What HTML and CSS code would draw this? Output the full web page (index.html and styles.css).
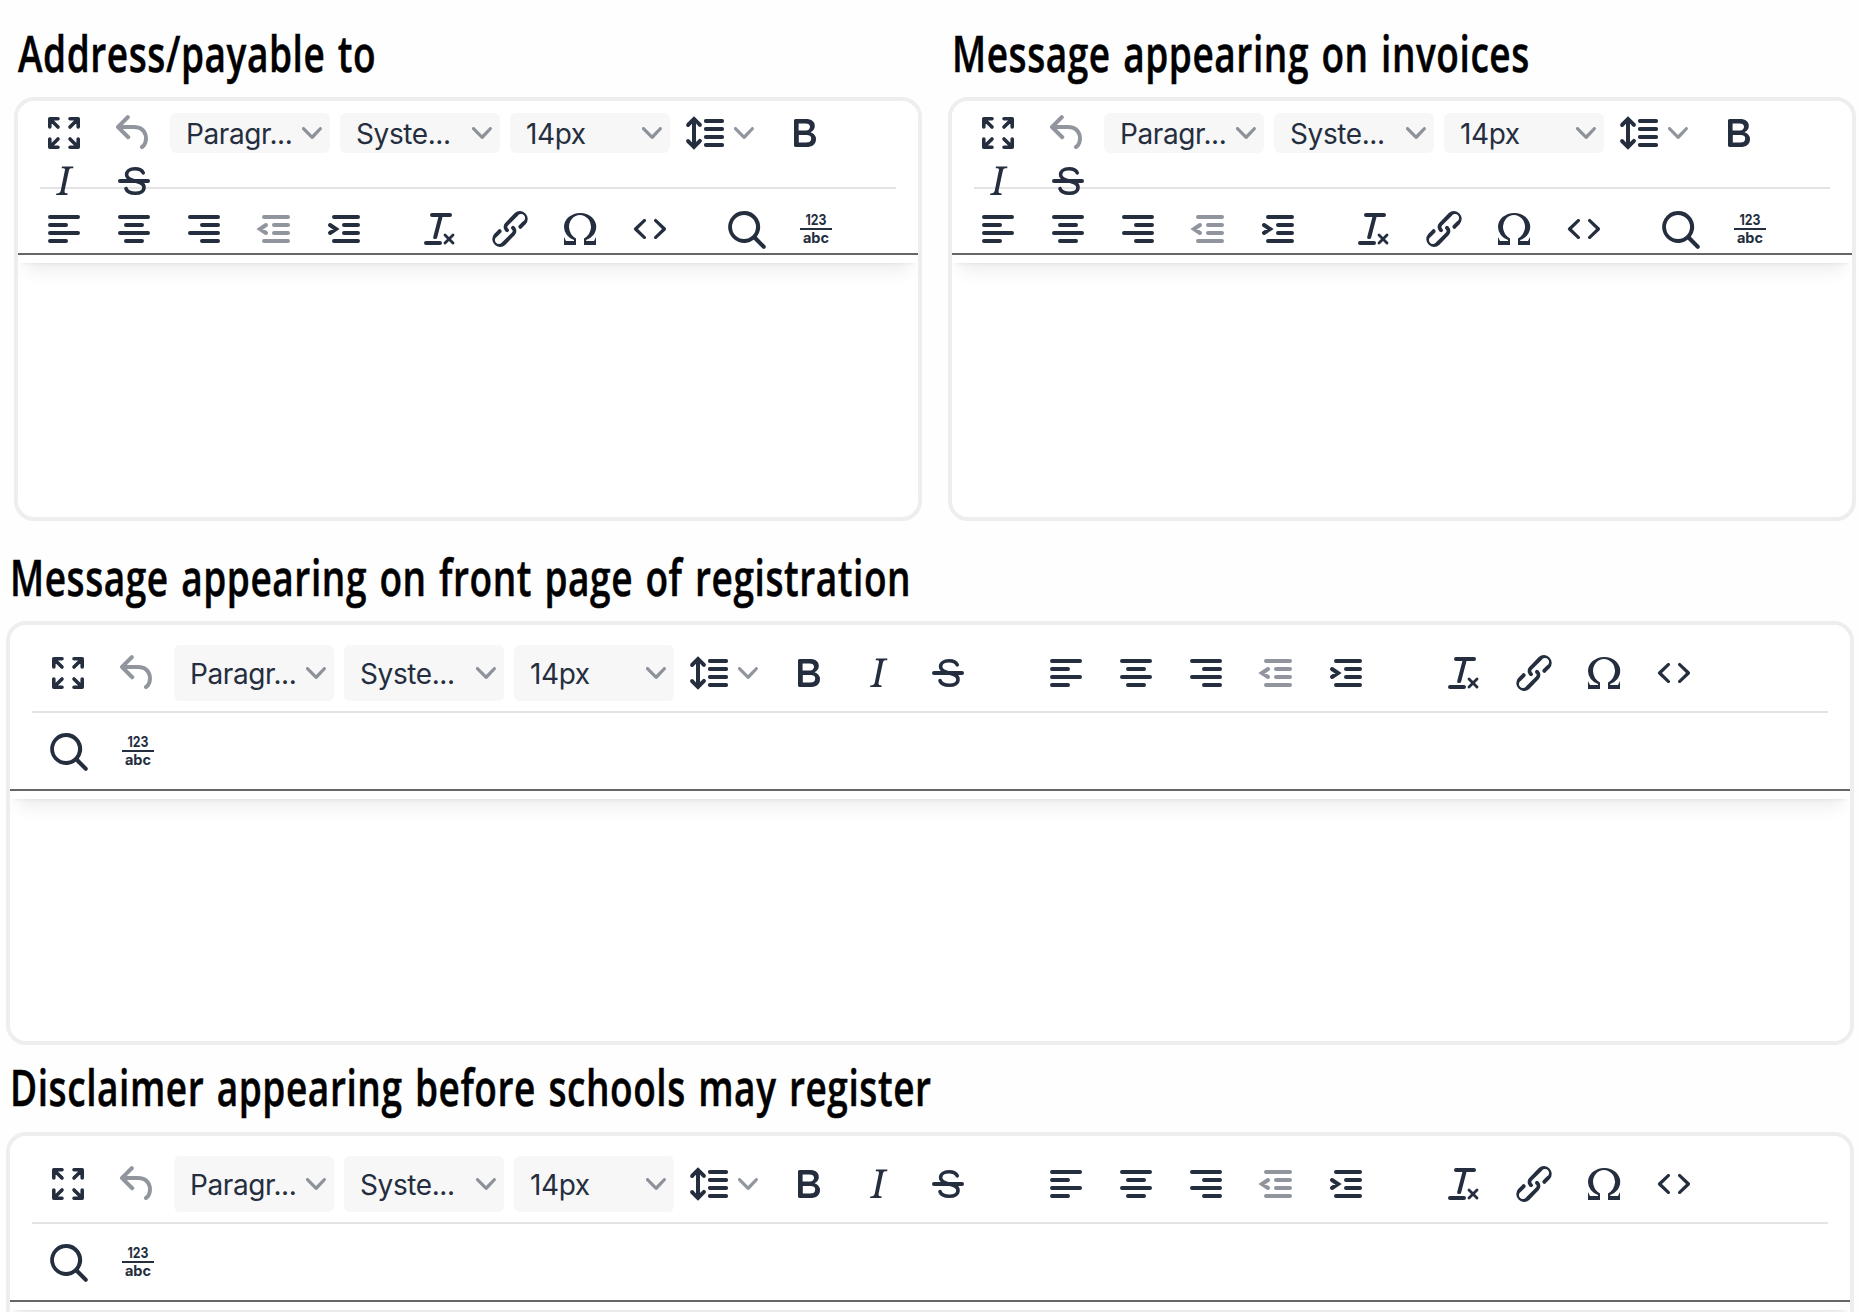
FILE: index.html
```html
<!DOCTYPE html>
<html lang="en">
<head>
<meta charset="utf-8">
<title>Messages</title>
<link rel="stylesheet" href="styles.css">
</head>
<body>
<svg class="sprite" xmlns="http://www.w3.org/2000/svg">
  <symbol id="fullscreen" viewBox="0 0 24 24"><path class="line" stroke-width="1.800" stroke-linejoin="round" d="M4.900 9V4.900H9M5.200 5.200 9 9M15 4.900h4.100V9M18.800 5.200 15 9M4.900 15v4.100H9M5.200 18.800 9 15M15 19.100h4.100V15M18.800 18.800 15 15"/></symbol>
  <symbol id="undo" viewBox="0 0 24 24"><path d="M6.400 8H12c3.700 0 6.200 2 6.800 5.100.6 2.700-.4 5.600-2.300 6.800a1 1 0 0 1-1-1.800c1.100-.6 1.800-2.700 1.400-4.600-.5-2.100-2.100-3.500-4.900-3.500H6.400l3.300 3.300a1 1 0 1 1-1.400 1.400l-5-5a1 1 0 0 1 0-1.400l5-5a1 1 0 0 1 1.400 1.400L6.400 8Z"/></symbol>
  <symbol id="chevron" viewBox="0 0 10 10"><path d="M8.700 2.200c.3-.3.800-.3 1 0 .4.400.4.900 0 1.200L5.700 7.800c-.3.300-.9.300-1.200 0L.2 3.400a.8.800 0 0 1 0-1.200c.3-.3.800-.3 1.100 0L5 6l3.700-3.800Z"/></symbol>
  <symbol id="lineheight" viewBox="0 0 24 24"><path d="M21 5a1 1 0 0 1 .1 2H13a1 1 0 0 1-.1-2H21Zm0 4a1 1 0 0 1 .1 2H13a1 1 0 0 1-.1-2H21Zm0 4a1 1 0 0 1 .1 2H13a1 1 0 0 1-.1-2H21Zm0 4a1 1 0 0 1 .1 2H13a1 1 0 0 1-.1-2H21ZM7 3.600l3.700 3.700a1 1 0 0 1-1.300 1.500h-.1L8 7.300v9.200l1.300-1.300a1 1 0 0 1 1.300 0h.1c.4.400.4 1 0 1.300v.1L7 20.400l-3.700-3.700a1 1 0 0 1 1.300-1.500h.1L6 16.700V7.400L4.700 8.700a1 1 0 0 1-1.300 0h-.1a1 1 0 0 1 0-1.300v-.1L7 3.600Z"/></symbol>
  <symbol id="bold" viewBox="0 0 24 24"><path d="M7.800 19c-.3 0-.5 0-.6-.2l-.2-.5V5.700c0-.2 0-.4.2-.5l.6-.2h5c1.500 0 2.700.3 3.500 1 .7.600 1.100 1.400 1.100 2.500a3 3 0 0 1-.6 1.900c-.4.600-1 1-1.600 1.200.4.100.9.300 1.300.6s.8.700 1 1.200c.4.400.5 1 .5 1.600 0 1.300-.4 2.300-1.300 3-.8.700-2.100 1-3.800 1H7.800Zm5-8.300c.6 0 1.200-.1 1.600-.5.4-.3.600-.7.600-1.300 0-1.100-.8-1.700-2.300-1.700H9.300v3.500h3.400Zm.5 6c.7 0 1.300-.1 1.700-.4.4-.4.600-.9.600-1.500s-.2-1-.7-1.400c-.4-.3-1-.4-2-.4H9.400v3.800h4Z"/></symbol>
  <symbol id="italic" viewBox="0 0 24 24"><path d="m16.700 4.700-.1.900h-.3c-.6 0-1 0-1.400.3-.3.300-.4.600-.5 1.100l-2.100 9.800v.6c0 .5.400.8 1.400.8h.2l-.2.800H8l.2-.8h.2c1.100 0 1.800-.5 2-1.500l2-9.800.1-.5c0-.6-.4-.8-1.400-.8h-.3l.2-.9h5.800Z"/></symbol>
  <symbol id="strike" viewBox="0 0 24 24"><path class="line" stroke-width="1.800" d="M16.600 7.900C16 6.600 14.600 5.900 12.500 5.900c-2.500 0-4.200 1.200-4.200 3 0 1.800 1.500 2.500 4.200 3.100 3 .7 4.500 1.400 4.500 3.200 0 1.800-1.700 2.900-4.300 2.900-2.400 0-4.200-.8-4.700-2.300"/><path d="M5 11h14a1 1 0 0 1 0 2H5a1 1 0 0 1 0-2Z"/></symbol>
  <symbol id="left" viewBox="0 0 24 24"><path class="line" stroke-width="2" d="M5 6h14M5 10h8M5 14h14M5 18h8"/></symbol>
  <symbol id="center" viewBox="0 0 24 24"><path class="line" stroke-width="2" d="M5 6h14M8 10h8M5 14h14M8 18h8"/></symbol>
  <symbol id="right" viewBox="0 0 24 24"><path class="line" stroke-width="2" d="M5 6h14M11 10h8M5 14h14M11 18h8"/></symbol>
  <symbol id="outdent" viewBox="0 0 24 24"><path class="line" stroke-width="2" d="M7 6h12M12 10h7M12 14h7M7 18h12M8 10l-3 2 3 2"/></symbol>
  <symbol id="indent" viewBox="0 0 24 24"><path class="line" stroke-width="2" d="M7 6h12M12 10h7M12 14h7M7 18h12M5 10l3 2-3 2"/></symbol>
  <symbol id="clear" viewBox="0 0 24 24"><path d="M13.200 6a1 1 0 0 1 0 .2l-2.600 10a1 1 0 0 1-1 .8h-.2a.8.800 0 0 1-.8-1l2.600-10H8a1 1 0 1 1 0-2h9a1 1 0 0 1 0 2h-3.800ZM5 18h7a1 1 0 0 1 0 2H5a1 1 0 0 1 0-2Zm13 1.500L16.500 18 15 19.500a.7.700 0 0 1-1-1l1.500-1.500-1.500-1.500a.7.700 0 0 1 1-1l1.500 1.500 1.500-1.500a.7.700 0 0 1 1 1L17.500 17l1.500 1.500a.7.700 0 0 1-1 1Z"/></symbol>
  <symbol id="link" viewBox="0 0 24 24"><path d="M6.200 12.300a1 1 0 0 1 1.400 1.400l-2 2a2 2 0 1 0 2.600 2.800l4.800-4.800a1 1 0 0 0 0-1.400 1 1 0 1 1 1.400-1.300 2.900 2.900 0 0 1 0 4L9.600 20a3.900 3.900 0 0 1-5.500-5.500l2-2Zm11.600-.6a1 1 0 0 1-1.400-1.400l2-2a2 2 0 1 0-2.600-2.800L11 10.300a1 1 0 0 0 0 1.400A1 1 0 1 1 9.600 13a2.900 2.900 0 0 1 0-4L14.400 4a3.900 3.900 0 0 1 5.500 5.500l-2 2Z"/></symbol>
  <symbol id="omega" viewBox="0 0 24 24"><path d="M15 18h4l1-2v4h-6v-3.300l1.400-1a6 6 0 0 0 1.800-2.900 6.300 6.300 0 0 0-.1-4.100 5.800 5.800 0 0 0-3-3.200c-.6-.3-1.300-.5-2.100-.5a5.100 5.100 0 0 0-3.900 1.800 6.300 6.300 0 0 0-1.300 6 6.200 6.200 0 0 0 1.800 3l1.400.9V20H4v-4l1 2h4v-.5l-2-1L5.400 15A6.500 6.500 0 0 1 4 11c0-1 .2-1.900.6-2.700A7 7 0 0 1 6.300 6C7.100 5.400 8 5 9 4.500c1-.3 2-.5 3.100-.5a8.800 8.800 0 0 1 5.700 2 7 7 0 0 1 1.700 2.300 6 6 0 0 1 .2 4.800c-.2.700-.6 1.300-1 1.900a7.600 7.600 0 0 1-3.600 2.500v.5Z"/></symbol>
  <symbol id="code" viewBox="0 0 24 24"><path d="M9.800 15.700c.3.300.3.800 0 1-.3.400-.9.400-1.200 0l-4.400-4.100a.8.800 0 0 1 0-1.200l4.400-4.200c.3-.3.900-.3 1.200 0 .3.300.3.800 0 1.100L6 12l3.800 3.700ZM14.200 15.700c-.3.300-.3.800 0 1 .4.400.9.400 1.200 0l4.400-4.100c.3-.3.300-.9 0-1.200l-4.400-4.200a.8.800 0 0 0-1.200 0c-.3.300-.3.800 0 1.100L18 12l-3.800 3.700Z"/></symbol>
  <symbol id="search" viewBox="0 0 24 24"><path d="M16 17.300a8 8 0 1 1 1.400-1.400l4.300 4.400a1 1 0 0 1-1.400 1.400l-4.400-4.300Zm-5-.3a6 6 0 1 0 0-12 6 6 0 0 0 0 12Z"/></symbol>
</svg>
<main class="page">
  <section class="field compact"><h2 class="title"><span>Address/payable to</span></h2></section>
  <section class="field compact"><h2 class="title"><span>Message appearing on invoices</span></h2></section>
  <section class="field wide"><h2 class="title"><span>Message appearing on front page of registration</span></h2></section>
  <section class="field wide last"><h2 class="title"><span>Disclaimer appearing before schools may register</span></h2></section>
</main>
<script src="editor.js"></script>
</body>
</html>
```
FILE: styles.css
```css
* { box-sizing: border-box; }
body { margin: 0; background: #fefefe; }
.sprite { display: none; }
.line { fill: none; stroke: currentColor; stroke-linecap: round; }

.page {
  display: grid;
  grid-template-columns: 908px 908px;
  align-content: start;
  column-gap: 26px;
  height: 1312px;
  padding-left: 14px;
  overflow: hidden;
}
.field.wide { grid-column: 1 / -1; width: 1848px; margin-left: -8px; }

.title {
  margin: 0;
  height: 97px;
  padding: 18px 0 0 4px;
  font: 600 50px/70px "Open Sans", sans-serif;
  letter-spacing: .78px;
  word-spacing: 3px;
  color: #000;
  white-space: nowrap;
  -webkit-text-stroke: .5px #000;
}
.wide .title { height: 100px; padding-top: 21px; }
.last .title { height: 87px; padding-top: 7px; }
.title span { display: inline-block; transform: scaleX(.74); transform-origin: 0 50%; }

.editor {
  height: 424px;
  border: 4px solid #eee;
  border-radius: 20px;
  background: #fff;
  overflow: hidden;
}
.toolbar {
  height: 162px;
  color: #252e3e;
  background: #fff;
  box-shadow: 0 4px 4px -4px rgba(0, 0, 0, .1), 0 16px 16px -8px rgba(0, 0, 0, .07);
}
.bars { height: 154px; border-bottom: 2px solid #666; }
.wide .toolbar { height: 174px; }
.wide .bars { height: 166px; }

.row { display: flex; flex-wrap: wrap; align-content: flex-start; height: 86px; padding: 8px 0 0 11px; }
.compact .second { height: 64px; padding-top: 16px; }
.wide .row { padding: 24px 0 0 23px; }
.wide .second { height: 76px; padding-top: 14px; }
.rule { height: 2px; margin: 0 22px; background: #e3e3e3; }
.compact .gap { width: 26px; }
.wide .gap { width: 48px; }
.wrap { flex-basis: 100%; height: 0; }

.btn { width: 48px; height: 48px; margin: 0 11px; position: relative; z-index: 1; }
.icon { display: block; flex: none; width: 48px; height: 48px; fill: currentColor; }
.off { opacity: .5; }
.menu { display: flex; width: 74px; height: 48px; margin: 0 15px 0 1px; gap: 6px; align-items: center; }
.chevron { display: block; flex: none; width: 20px; height: 20px; fill: currentColor; opacity: .5; }
.select {
  display: flex;
  align-items: center;
  justify-content: space-between;
  width: 160px;
  height: 40px;
  margin: 4px 9px 0 1px;
  padding: 0 8px 0 16px;
  border-radius: 6px;
  background: #f7f7f7;
  font: 28px/40px Inter, sans-serif;
  letter-spacing: -.4px;
}
.select span { padding-top: 2px; }
.wide .select { height: 56px; margin-top: -4px; margin-bottom: -4px; }

.count { width: 32px; margin: 0 19px; padding-top: 7px; font: 700 15px/15px Inter, sans-serif; text-align: center; }
.count span { display: block; height: 16px; line-height: 16px; }
.count .digits { transform: scaleX(.82); }
.count .letters { height: 18px; border-top: 2px solid; font-size: 14.5px; line-height: 16px; }
```
FILE: editor.js
```js
const icon = (name, off) =>
  `<div class="btn${off ? ' off' : ''}"><svg class="icon"><use href="#${name}"/></svg></div>`;
const chevron = '<svg class="chevron"><use href="#chevron"/></svg>';
const select = label => `<div class="select"><span>${label}</span>${chevron}</div>`;
const gap = '<div class="gap"></div>';

const start = icon('fullscreen') + icon('undo', true) + select('Paragr...') + select('Syste...') +
  select('14px') + `<div class="menu"><svg class="icon"><use href="#lineheight"/></svg>${chevron}</div>` + icon('bold');
const marks = icon('italic') + icon('strike');
const align = icon('left') + icon('center') + icon('right') + icon('outdent', true) + icon('indent');
const insert = icon('clear') + icon('link') + icon('omega') + icon('code');
const find = icon('search') +
  '<div class="count"><span class="digits">123</span><span class="letters">abc</span></div>';

document.querySelectorAll('.field').forEach(field => {
  const compact = field.classList.contains('compact');
  const first = compact ? start + '<div class="wrap"></div>' + marks : start + marks + gap + align + gap + insert;
  const second = compact ? align + gap + insert + gap + find : find;
  field.insertAdjacentHTML('beforeend', `
    <div class="editor"><div class="toolbar"><div class="bars">
      <div class="row">${first}</div><div class="rule"></div><div class="row second">${second}</div>
    </div></div></div>`);
});
```
